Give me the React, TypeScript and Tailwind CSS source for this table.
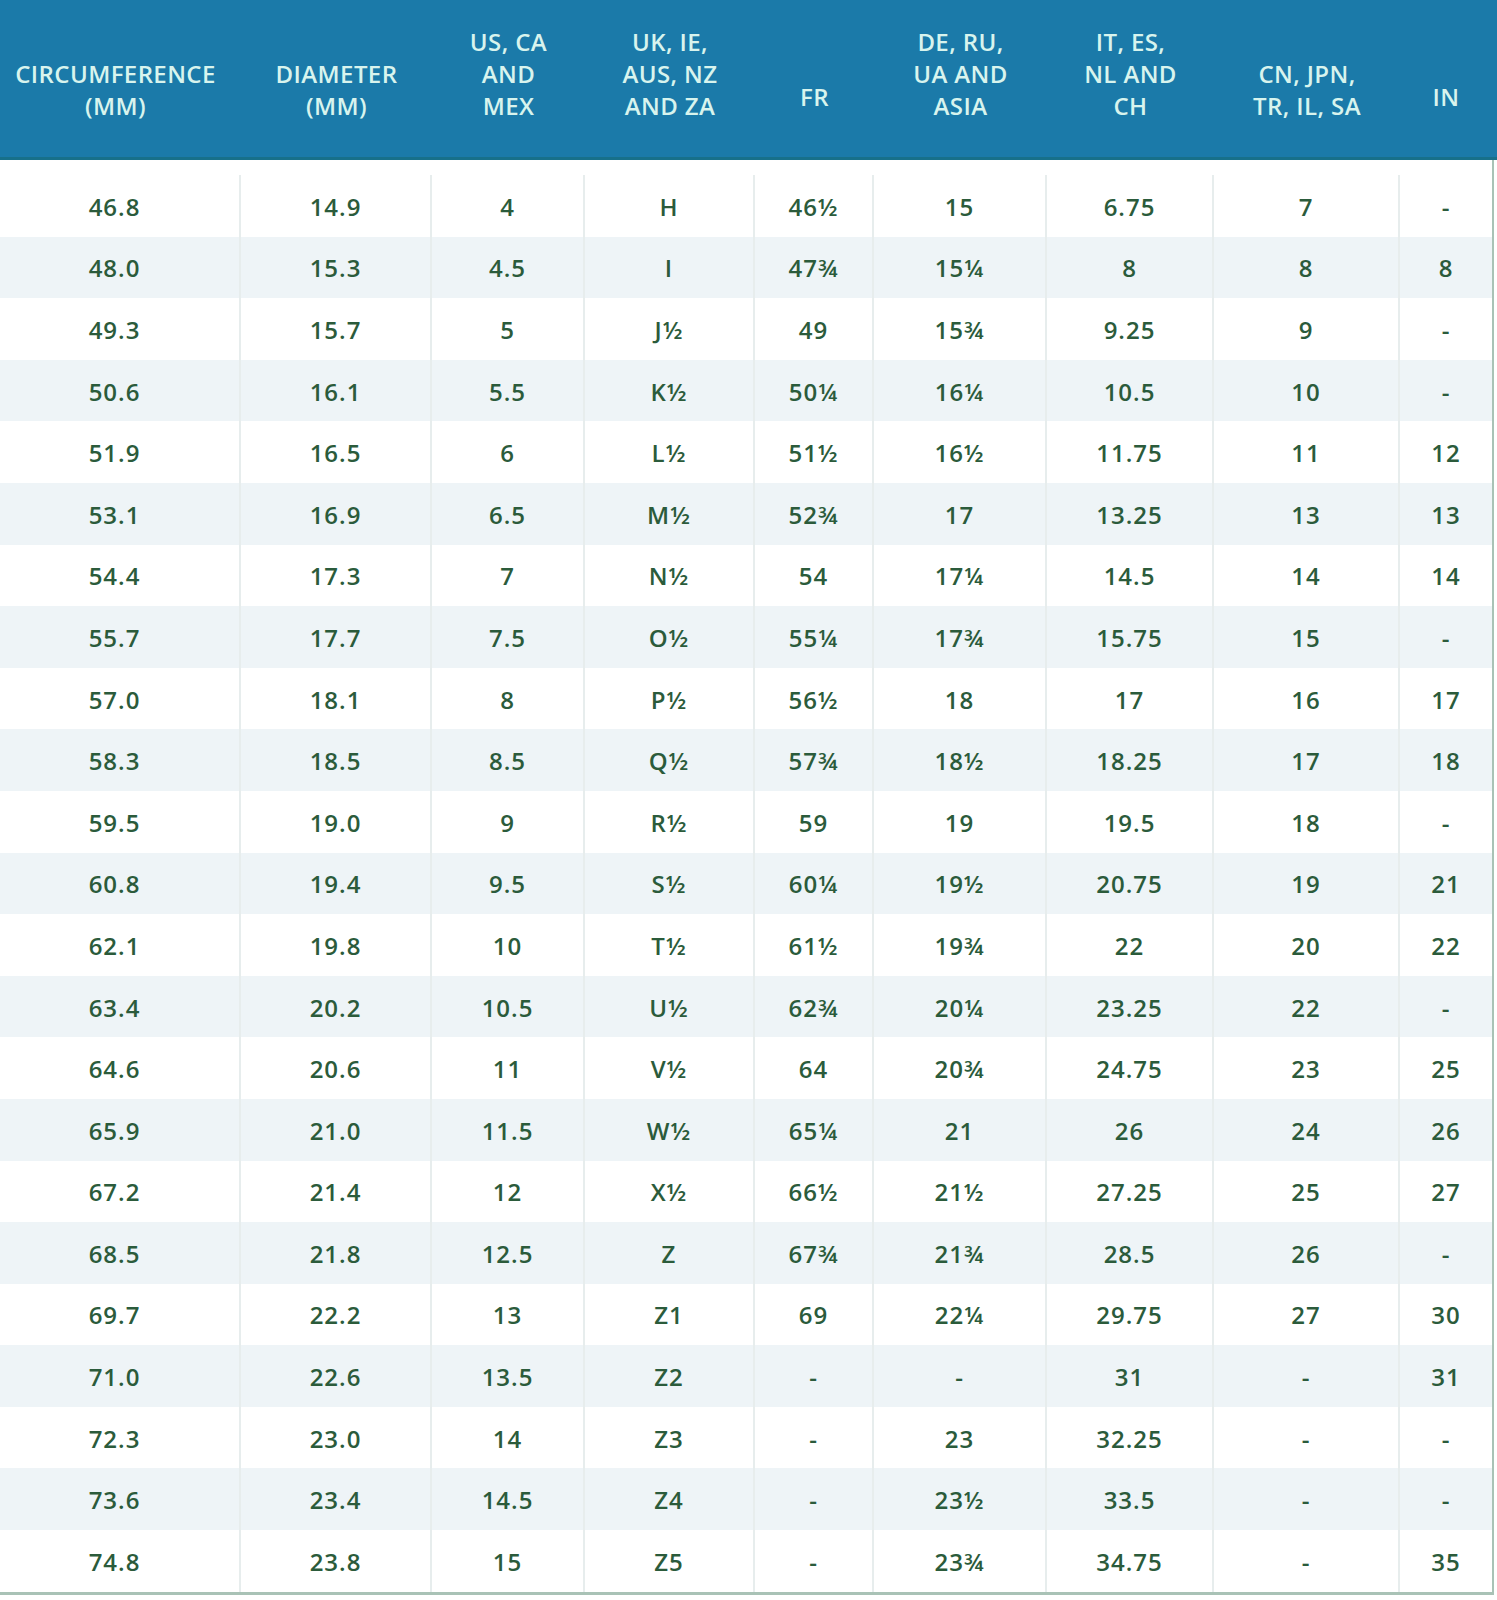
const COLS = "grid grid-cols-[241px_191px_153px_170px_119px_173px_167px_186px_92px]";

const headers: string[][] = [
  ["CIRCUMFERENCE", "(MM)"],
  ["DIAMETER", "(MM)"],
  ["US, CA", "AND", "MEX"],
  ["UK, IE,", "AUS, NZ", "AND ZA"],
  ["FR"],
  ["DE, RU,", "UA AND", "ASIA"],
  ["IT, ES,", "NL AND", "CH"],
  ["CN, JPN,", "TR, IL, SA"],
  ["IN"],
];

const rows: string[][] = [
  ["46.8", "14.9", "4", "H", "46½", "15", "6.75", "7", "-"],
  ["48.0", "15.3", "4.5", "I", "47¾", "15¼", "8", "8", "8"],
  ["49.3", "15.7", "5", "J½", "49", "15¾", "9.25", "9", "-"],
  ["50.6", "16.1", "5.5", "K½", "50¼", "16¼", "10.5", "10", "-"],
  ["51.9", "16.5", "6", "L½", "51½", "16½", "11.75", "11", "12"],
  ["53.1", "16.9", "6.5", "M½", "52¾", "17", "13.25", "13", "13"],
  ["54.4", "17.3", "7", "N½", "54", "17¼", "14.5", "14", "14"],
  ["55.7", "17.7", "7.5", "O½", "55¼", "17¾", "15.75", "15", "-"],
  ["57.0", "18.1", "8", "P½", "56½", "18", "17", "16", "17"],
  ["58.3", "18.5", "8.5", "Q½", "57¾", "18½", "18.25", "17", "18"],
  ["59.5", "19.0", "9", "R½", "59", "19", "19.5", "18", "-"],
  ["60.8", "19.4", "9.5", "S½", "60¼", "19½", "20.75", "19", "21"],
  ["62.1", "19.8", "10", "T½", "61½", "19¾", "22", "20", "22"],
  ["63.4", "20.2", "10.5", "U½", "62¾", "20¼", "23.25", "22", "-"],
  ["64.6", "20.6", "11", "V½", "64", "20¾", "24.75", "23", "25"],
  ["65.9", "21.0", "11.5", "W½", "65¼", "21", "26", "24", "26"],
  ["67.2", "21.4", "12", "X½", "66½", "21½", "27.25", "25", "27"],
  ["68.5", "21.8", "12.5", "Z", "67¾", "21¾", "28.5", "26", "-"],
  ["69.7", "22.2", "13", "Z1", "69", "22¼", "29.75", "27", "30"],
  ["71.0", "22.6", "13.5", "Z2", "-", "-", "31", "-", "31"],
  ["72.3", "23.0", "14", "Z3", "-", "23", "32.25", "-", "-"],
  ["73.6", "23.4", "14.5", "Z4", "-", "23½", "33.5", "-", "-"],
  ["74.8", "23.8", "15", "Z5", "-", "23¾", "34.75", "-", "35"],
];

export default function App() {
  return (
    <div className="w-[1497px] bg-white font-['Open_Sans',sans-serif]">
      {/* header band runs the full width */}
      <div className={`${COLS} h-[160px] bg-[#1b7aa9] border-b-[3px] border-[#17708a]`}>
        {headers.map((lines, i) => (
          <div
            key={i}
            className={`flex flex-col items-center justify-end text-center text-[24px] leading-[32px] font-semibold tracking-[0.4px] text-[#d8f4ee] ${
              lines.length === 1 ? "pb-[44px]" : "pb-[35px]"
            } ${i === 0 ? "pr-[10px]" : ""}`}
          >
            {lines.map((l) => (
              <span key={l} className="whitespace-nowrap">{l}</span>
            ))}
          </div>
        ))}
      </div>

      <div className="w-[1494px] border-r-2 border-b-[3px] border-[#a9c2b6]">
        <div className="h-[15px]" />
        {rows.map((r, ri) => (
          <div key={ri} className={`${COLS} h-[61.6px] ${ri % 2 === 1 ? "bg-[#eef4f7]" : "bg-white"}`}>
            {r.map((c, ci) => (
              <div
                key={ci}
                className={`flex items-center justify-center pt-[2px] text-[24px] font-semibold tracking-[1px] text-[#2b5b3b] ${
                  ci < 8 ? "border-r-2 border-[#e7eded]" : ""
                } ${ci === 0 ? "pr-[10px]" : ""}`}
              >
                {c}
              </div>
            ))}
          </div>
        ))}
      </div>
    </div>
  );
}
